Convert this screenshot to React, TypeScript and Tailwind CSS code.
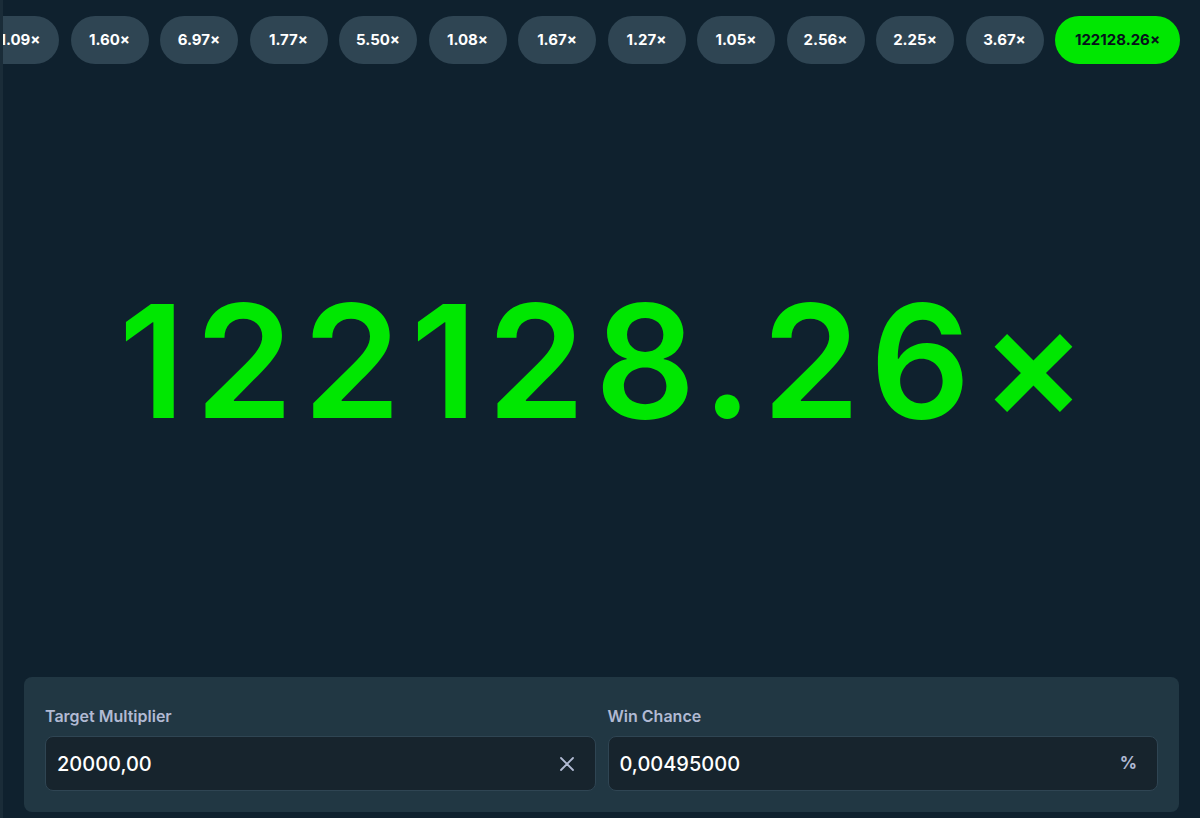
import React from "react";

const history = ["1.09", "1.60", "6.97", "1.77", "5.50", "1.08", "1.67", "1.27", "1.05", "2.56", "2.25", "3.67"];

function Pill({ value, active }: { value: string; active?: boolean }) {
  return (
    <div
      className={
        active
          ? "shrink-0 h-12 w-[125px] rounded-full flex items-center justify-center bg-[#00e701] text-[#05121a] text-[15px] font-bold"
          : "shrink-0 h-12 w-[78px] rounded-full flex items-center justify-center bg-[#2f4553] text-white text-[15px] font-bold"
      }
    >
      {value}×
    </div>
  );
}

function Field({ label, value, suffix }: { label: string; value: string; suffix: React.ReactNode }) {
  return (
    <div className="flex-1 flex flex-col gap-[10px]">
      <div className="text-[16px] font-semibold text-[#b1bad3] leading-5">{label}</div>
      <div className="h-[55px] rounded-[8px] border border-[#2f4553] bg-[#17242d] flex items-center pl-[11px] pr-[20px]">
        <div className="flex-1 text-white text-[20px] font-medium">{value}</div>
        <div className="text-[#b1bad3]">{suffix}</div>
      </div>
    </div>
  );
}

export default function App() {
  return (
    <div
      className="w-[1200px] h-[818px] bg-[#0f212e] flex flex-col overflow-hidden border-l-[3px] border-[#1a2c38]"
      style={{ fontFamily: "Inter, 'Noto Sans', sans-serif" }}
    >
      <div className="flex justify-end gap-[11.5px] pt-4 pr-[20px] overflow-hidden">
        {history.map((v, i) => (
          <Pill key={i} value={v} />
        ))}
        <Pill value="122128.26" active />
      </div>

      <div className="flex-1 flex items-center justify-center pb-[18px] pl-[12px]">
        <div className="text-[#00e701] text-[157px] font-semibold leading-none tracking-[10px]">122128.26×</div>
      </div>

      <div className="mx-[21px] mb-[6px] rounded-[8px] bg-[#213743] px-[21px] pt-[29px] pb-[21px] flex gap-[12px]">
        <Field
          label="Target Multiplier"
          value="20000,00"
          suffix={
            <svg width="16" height="16" viewBox="0 0 16 16" fill="none" stroke="#b1bad3" strokeWidth="1.8" strokeLinecap="round">
              <path d="M2 2L14 14M14 2L2 14" />
            </svg>
          }
        />
        <Field label="Win Chance" value="0,00495000" suffix={<span className="text-[17px] font-bold">%</span>} />
      </div>
    </div>
  );
}
